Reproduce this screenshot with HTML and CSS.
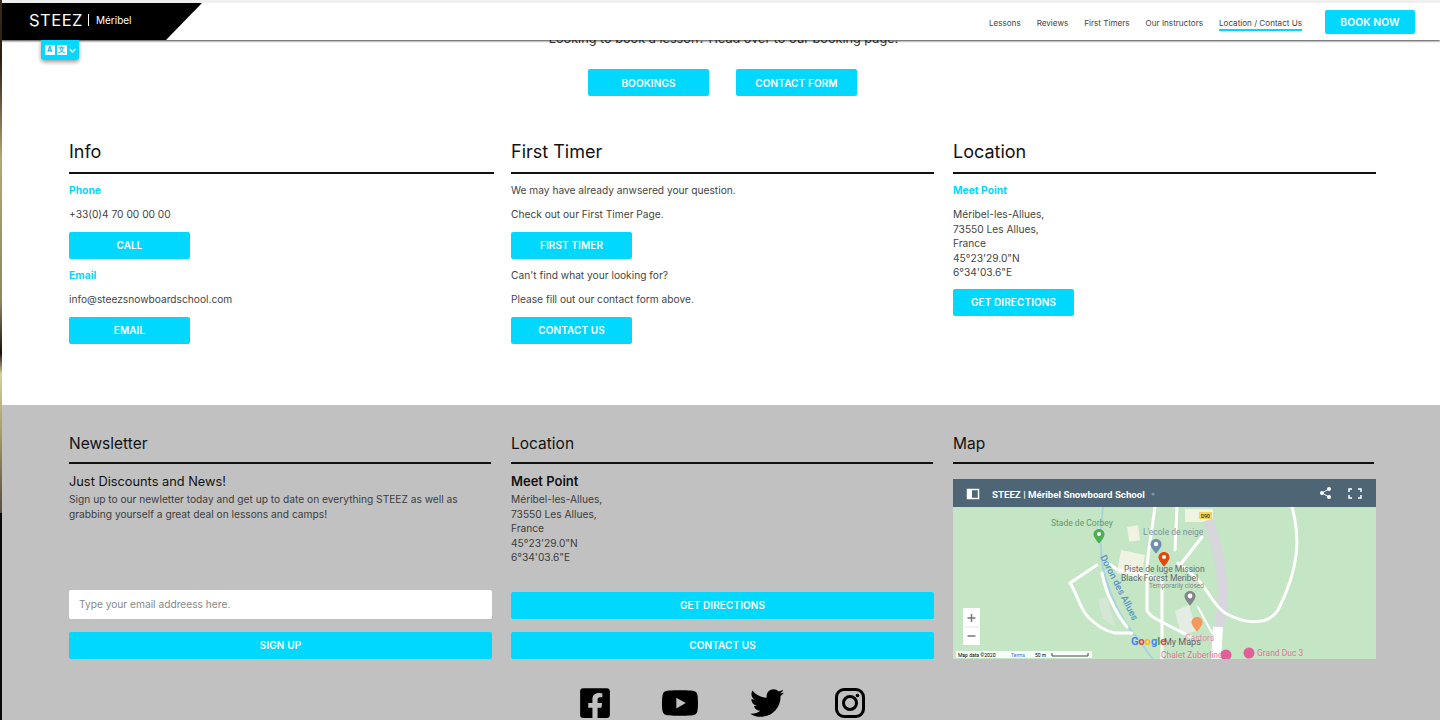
FILE: index.html
```html
<!DOCTYPE html>
<html lang="en">
<head>
<meta charset="utf-8">
<title>STEEZ | Méribel Snowboard School</title>
<link rel="stylesheet" href="styles.css">
</head>
<body>
<div class="page">
  <header class="topbar">
    <div class="brand"><span class="brand-name">STEEZ</span><span class="brand-sub">Méribel</span></div>
    <nav class="nav">
      <a class="link">Lessons</a><a class="link">Reviews</a><a class="link">First Timers</a><a class="link">Our Instructors</a><a class="link active">Location / Contact Us</a>
      <a class="btn book">BOOK NOW</a>
    </nav>
    <div class="lang">
      <span class="lang-box">A</span><span class="lang-box">文</span>
      <svg class="chev" viewBox="0 0 10 6"><path d="M1 1l4 4 4-4" fill="none" stroke="#fff" stroke-width="2"/></svg>
    </div>
  </header>

  <main class="main">
    <p class="intro">Looking to book a lesson? Head over to our booking page.</p>
    <div class="intro-btns"><a class="btn">BOOKINGS</a><a class="btn">CONTACT FORM</a></div>
    <section class="cols">
      <div class="col">
        <h2>Info</h2>
        <h3>Phone</h3>
        <p>+33(0)4 70 00 00 00</p>
        <a class="btn">CALL</a>
        <h3>Email</h3>
        <p>info@steezsnowboardschool.com</p>
        <a class="btn">EMAIL</a>
      </div>
      <div class="col">
        <h2>First Timer</h2>
        <p>We may have already anwsered your question.</p>
        <p>Check out our First Timer Page.</p>
        <a class="btn">FIRST TIMER</a>
        <p>Can't find what your looking for?</p>
        <p>Please fill out our contact form above.</p>
        <a class="btn">CONTACT US</a>
      </div>
      <div class="col">
        <h2>Location</h2>
        <h3>Meet Point</h3>
        <p>Méribel-les-Allues,<br>73550 Les Allues,<br>France<br>45°23'29.0"N<br>6°34'03.6"E</p>
        <a class="btn">GET DIRECTIONS</a>
      </div>
    </section>
  </main>

  <footer class="footer">
    <div class="fcols">
      <div class="fcol">
        <h2>Newsletter</h2>
        <h4>Just Discounts and News!</h4>
        <p>Sign up to our newletter today and get up to date on everything STEEZ as well as grabbing yourself a great deal on lessons and camps!</p>
        <form class="fform news">
          <input type="text" placeholder="Type your email addreess here.">
          <a class="btn wide">SIGN UP</a>
        </form>
      </div>
      <div class="fcol">
        <h2>Location</h2>
        <h4 class="strong">Meet Point</h4>
        <p>Méribel-les-Allues,<br>73550 Les Allues,<br>France<br>45°23'29.0"N<br>6°34'03.6"E</p>
        <div class="fform">
          <a class="btn wide">GET DIRECTIONS</a>
          <a class="btn wide">CONTACT US</a>
        </div>
      </div>
      <div class="fcol">
        <h2>Map</h2>
        <svg class="map" viewBox="0 0 423 180" xmlns="http://www.w3.org/2000/svg">
          <defs>
            <path id="pin" d="M0 0c-3.1 0-5.5 2.4-5.5 5.2 0 3.8 5.5 9.3 5.5 9.3s5.5-5.5 5.5-9.3C5.5 2.4 3.1 0 0 0z"/>
          </defs>
          <rect width="423" height="180" fill="#c4e6c4"/>
          <rect x="232" y="30" width="28" height="13" fill="#f0f3e2"/>
          <rect x="175" y="47" width="11" height="15" fill="#f0f3e2" transform="rotate(-8 181 54)"/>
          <path d="M168 71l24 5-4 24-24-6z" fill="#f0f3e2"/>
          <path d="M222 132l14-6 8 26-16 4z" fill="#e4ece4"/>
          <path d="M145 120l9-2 8 30-12-8z" fill="#d6e6d6"/>
          <path d="M150 28c-2 20-4 40 0 60s16 50 30 66 14 20 20 26" fill="none" stroke="#a9d4dc" stroke-width="2"/>
          <path d="M255 41c10 30 16 50 14 90l-4 20" fill="none" stroke="#d6d6dc" stroke-width="10"/>
          <path d="M265 148l-2 34" fill="none" stroke="#fff" stroke-width="10"/>
          <g fill="none" stroke="#fff" stroke-width="3" stroke-linecap="round" stroke-linejoin="round">
            <path d="M339 28c8 30 8 60-14 103-10 16-34 14-53 3-12-8-20-28-27-33-8-8-14-14-20-17"/>
            <path d="M144 86l-27 18c6 8 10 26 18 34s16 14 27 16h17"/>
            <path d="M149 94c2 12 6 22 10 30s10 18 15 24"/>
            <path d="M155 84l10 7c16 2 30 4 44 10"/>
            <path d="M202 28c-4 30-8 50-8 63v40c2 6 8 8 11 10l33 17"/>
            <path d="M224 28l-2 43"/>
            <path d="M249 58l-22 28"/>
            <path d="M209 101v80"/>
            <path d="M245 128l14 26" stroke-width="2"/>
          </g>
          <rect width="423" height="28" fill="#4d6574"/>
          <rect x="14.5" y="10.5" width="11" height="9" fill="none" stroke="#fff" stroke-width="1.5"/>
          <rect x="14" y="10" width="5" height="10" fill="#fff"/>
          <text x="39" y="19" class="m-title">STEEZ | Méribel Snowboard School</text>
          <circle cx="200" cy="15" r="1.6" fill="#7d93a0"/>
          <g fill="#fff"><circle cx="369" cy="14" r="2"/><circle cx="376" cy="10" r="2"/><circle cx="376" cy="18" r="2"/></g>
          <path d="M376 10l-7 4 7 4" fill="none" stroke="#fff" stroke-width="1"/>
          <path d="M396 13v-3h3M405 10h3v3M408 16v3h-3M399 19h-3v-3" fill="none" stroke="#fff" stroke-width="1.5"/>
          <rect x="246" y="33" width="13" height="7" fill="#f4d45a"/>
          <text x="248" y="39" class="m-tiny">D90</text>
          <text x="98" y="47" class="m-label" fill="#5c9a6c">Stade de Corbey</text>
          <text x="190" y="56" class="m-label" fill="#7d8fa0">L'ecole de neige</text>
          <text x="171" y="93" class="m-label" fill="#616a70">Piste de luge Mission</text>
          <text x="168" y="101" class="m-label" fill="#616a70" dy="1">Black Forest Meribel</text>
          <text x="196" y="109" class="m-small" fill="#80868b">Temporarily closed</text>
          <text class="m-river" transform="translate(147 78) rotate(63)" fill="#5b92c9">Doron des Allues</text>
          <use href="#pin" transform="translate(146 50)" fill="#4caf50"/>
          <circle cx="146" cy="55" r="2" fill="#fff"/>
          <use href="#pin" transform="translate(203 60)" fill="#6f8faf"/>
          <circle cx="203" cy="65" r="2.2" fill="#fff"/>
          <use href="#pin" transform="translate(211 73)" fill="#e2490b"/>
          <circle cx="211" cy="78" r="2" fill="#fff"/>
          <use href="#pin" transform="translate(237 112)" fill="#80868b"/>
          <circle cx="237" cy="117" r="2.4" fill="#fff"/>
          <use href="#pin" transform="translate(244 138)" fill="#f29a5c"/>
          <text x="232" y="162" class="m-label" fill="#e58ca8">Castors</text>
          <rect x="10" y="129" width="17" height="37" rx="1" fill="#fff"/>
          <path d="M18.500 135v8M14.500 139h8M14.500 157h8" stroke="#777" stroke-width="1.500"/>
          <path d="M11 148h15" stroke="#e6e6e6"/>
          <text x="178" y="166" class="m-google"><tspan fill="#4285f4">G</tspan><tspan fill="#ea4335">o</tspan><tspan fill="#fbbc05">o</tspan><tspan fill="#4285f4">g</tspan><tspan fill="#34a853">l</tspan><tspan fill="#ea4335">e</tspan></text>
          <text x="211" y="166" class="m-maps" fill="#5f6368">My Maps</text>
          <text x="208" y="179" class="m-label" fill="#e8709a">Chalet Zuberlind</text>
          <circle cx="273" cy="176" r="5.500" fill="#e0609a"/>
          <circle cx="296" cy="174" r="5.500" fill="#e0609a"/>
          <text x="304" y="177" class="m-label" fill="#e8709a">Grand Duc 3</text>
          <rect x="3" y="172" width="136" height="7" fill="#fff" opacity=".9"/>
          <text x="5" y="178" class="m-tiny">Map data ©2020</text>
          <text x="58" y="178" class="m-tiny" fill="#1a73e8">Terms</text>
          <text x="82" y="178" class="m-tiny">50 m</text>
          <path d="M99 174v3h36v-3" fill="none" stroke="#444"/>
        </svg>
      </div>
    </div>
    <div class="social">
      <svg class="ico-fb" viewBox="0 0 448 512"><path d="M400 32H48A48 48 0 0 0 0 80v352a48 48 0 0 0 48 48h137.25V327.69h-63V256h63v-54.64c0-62.15 37-96.48 93.67-96.48 27.14 0 55.52 4.84 55.52 4.84v61h-31.27c-30.81 0-40.42 19.12-40.42 38.73V256h68.78l-11 71.69h-57.78V480H400a48 48 0 0 0 48-48V80a48 48 0 0 0-48-48z"/></svg>
      <svg class="ico-yt" viewBox="0 0 576 512"><path d="M549.655 124.083c-6.281-23.65-24.787-42.276-48.284-48.597C458.781 64 288 64 288 64S117.22 64 74.629 75.486c-23.497 6.322-42.003 24.947-48.284 48.597-11.412 42.867-11.412 132.305-11.412 132.305s0 89.438 11.412 132.305c6.281 23.65 24.787 41.5 48.284 47.821C117.22 448 288 448 288 448s170.78 0 213.371-11.486c23.497-6.321 42.003-24.171 48.284-47.821 11.412-42.867 11.412-132.305 11.412-132.305s0-89.438-11.412-132.305zm-317.51 213.508V175.185l142.739 81.205-142.739 81.201z"/></svg>
      <svg class="ico-tw" viewBox="0 0 512 512"><path d="M459.37 151.716c.325 4.548.325 9.097.325 13.645 0 138.72-105.583 298.558-298.558 298.558-59.452 0-114.68-17.219-161.137-47.106 8.447.974 16.568 1.299 25.34 1.299 49.055 0 94.213-16.568 130.274-44.832-46.132-.975-84.792-31.188-98.112-72.772 6.498.974 12.995 1.624 19.818 1.624 9.421 0 18.843-1.3 27.614-3.573-48.081-9.747-84.143-51.98-84.143-102.985v-1.299c13.969 7.797 30.214 12.67 47.431 13.319-28.264-18.843-46.781-51.005-46.781-87.391 0-19.492 5.197-37.36 14.294-52.954 51.655 63.675 129.3 105.258 216.365 109.807-1.624-7.797-2.599-15.918-2.599-24.04 0-57.828 46.782-104.934 104.934-104.934 30.213 0 57.502 12.67 76.67 33.137 23.715-4.548 46.456-13.32 66.599-25.34-7.798 24.366-24.366 44.833-46.132 57.827 21.117-2.273 41.584-8.122 60.426-16.243-14.292 20.791-32.161 39.308-52.628 54.253z"/></svg>
      <svg class="ico-ig" viewBox="0 0 30 34"><rect x="1.500" y="3.500" width="27" height="27" rx="7.500" fill="none" stroke="#000" stroke-width="3"/><circle cx="15" cy="17" r="6.500" fill="none" stroke="#000" stroke-width="3"/><circle cx="22.500" cy="9.500" r="1.800"/></svg>
    </div>
  </footer>
</div>
</body>
</html>
```
FILE: styles.css
```css
* { box-sizing: border-box; }
html, body { margin: 0; height: 720px; overflow: hidden; }
body {
  font-family: "Inter", "Liberation Sans", sans-serif;
  color: #444;
  background: linear-gradient(180deg, #3a2c1c 0, #2a1c10 8%, #b3a679 22%, #8c8560 42%, #1a120a 49%, #d8cfa0 52%, #a89b6c 60%, #6d604a 68%, #5a5040 71.2%, #0a0a0a 71.3%, #0a0a0a 100%);
}
.page { margin-left: 2px; width: 1438px; height: 720px; background: #fff; position: relative; overflow: hidden; }
a { text-decoration: none; }
h2, h3, h4, p { margin: 0; }

.btn {
  display: flex; align-items: center; justify-content: center;
  width: 121px; height: 27px;
  background: #00d8ff; color: #fff;
  border-radius: 2px;
  font-size: 10px; font-weight: 600;
  letter-spacing: .1px;
}
.btn.wide { width: 100%; padding-bottom: 1px; }
.intro-btns .btn { padding-top: 1px; }

.topbar {
  position: absolute; top: 0; left: -2px; right: 0; height: 40px; z-index: 5;
  display: flex; justify-content: space-between; align-items: center;
  background: #fff;
  border-top: 3px solid #efefef;
  box-shadow: 0 1px 2px rgba(0,0,0,.75);
}
.brand {
  width: 200px; height: 37px; margin-left: 2px;
  display: flex; align-items: center;
  padding-left: 27px; padding-bottom: 4px;
  background: #000; color: #fff;
  clip-path: polygon(0 0, 100% 0, 164px 100%, 0 100%);
}
.brand-name { font-size: 16.500px; letter-spacing: .5px; }
.brand-sub { font-size: 10px; margin-left: 5px; padding-left: 7px; border-left: 1px solid #fff; line-height: 12px; }
.nav { display: flex; align-items: center; gap: 16px; margin-right: 25px; font-size: 8.100px; color: #444; }
.link { padding-top: 3px; line-height: 12px; }
.link.active { border-bottom: 2px solid #00d8ff; padding-bottom: 0; margin-bottom: -2px; }
.nav .btn.book { width: 90px; height: 24px; margin-left: 7px; font-size: 10.300px; color: #fff; }
.lang {
  position: absolute; left: 41px; top: 37px; width: 38px; height: 20px;
  display: flex; align-items: center; justify-content: center; gap: 2px;
  background: #00d8ff; border-radius: 0 0 3px 3px;
  box-shadow: 0 2px 4px rgba(0,0,0,.4);
}
.lang-box { width: 10px; height: 10px; background: #fff; color: #00b8e0; font-size: 7px; line-height: 10px; text-align: center; font-weight: 700; }
.chev { width: 7px; height: 5px; }

.main { height: 405px; padding: 31px 62px 0 67px; }
.intro { text-align: center; font-size: 12.700px; line-height: 15px; color: #333; }
.intro-btns { display: flex; justify-content: center; gap: 27px; margin-top: 23px; padding-right: 2px; }
.cols { display: grid; grid-template-columns: 442px 442px 423px; margin-top: 42px; }
.col { padding-right: 19px; }
.col:first-child { padding-right: 17px; }
.col:last-child { padding-right: 0; }
.col h2 {
  font-size: 18px; font-weight: 400; color: #111;
  height: 36px; line-height: 24px; padding-top: 2px;
  border-bottom: 2px solid #111; margin-bottom: 9px;
}
.col h3 { font-size: 10.300px; font-weight: 700; color: #00d8ff; line-height: 14.500px; margin-bottom: 9.500px; }
.col p { font-size: 10.200px; line-height: 14.500px; margin-bottom: 9.500px; }
.col .btn { margin: 10.500px 0 9px; padding-bottom: 2px; }
.col:last-child .btn { margin-top: 0; padding-bottom: 1px; }

.footer { height: 315px; background: #c1c1c1; padding: 27px 62px 0 67px; }
.fcols { display: grid; grid-template-columns: 442px 442px 423px; height: 227px; }
.fcol { display: flex; flex-direction: column; padding-right: 19px; }
.fcol:last-child { padding-right: 0; }
.fcol h2 {
  font-size: 15.500px; font-weight: 400; color: #111;
  height: 32px; line-height: 24px;
  border-bottom: 2px solid #111; margin-bottom: 9px; margin-right: 1px;
}
.fcol:last-child h2 { margin-right: 2px; }
.fcol h4 { font-size: 12.800px; font-weight: 400; line-height: 17px; color: #111; margin-bottom: 2px; }
.fcol h4.strong { font-size: 13px; font-weight: 600; }
.fcol p { font-size: 10.200px; line-height: 14.500px; color: #3c3c3c; }
.fform { margin-top: auto; display: flex; flex-direction: column; gap: 13px; }
.fform input {
  height: 29px; border: 0; border-radius: 2px; background: #fff;
  padding: 0 10px 2px; font: 400 10.200px "Inter", "Liberation Sans", sans-serif; color: #444;
}
.fform input::placeholder { color: #888; }
.map { display: block; width: 423px; height: 180px; margin-top: 6px; }
.m-title { font: 700 9.700px "Roboto", sans-serif; fill: #fff; }
.m-label { font: 400 8.500px "Roboto", sans-serif; }
.m-maps { font: 400 9px "Roboto", sans-serif; }
.m-small { font: 400 6.500px "Roboto", sans-serif; }
.m-river { font: 500 9.500px "Roboto", sans-serif; }
.m-tiny { font: 400 5px "Roboto", sans-serif; }
.m-google { font: 700 11px "Roboto", sans-serif; }

.social { display: flex; justify-content: center; gap: 51px; height: 34px; margin-top: 27px; padding-right: 2px; }
.social svg { display: block; height: 34px; fill: #000; }
.ico-fb { width: 30px; }
.ico-yt { width: 38px; }
.ico-tw { width: 34px; }
.ico-ig { width: 30px; }
```
